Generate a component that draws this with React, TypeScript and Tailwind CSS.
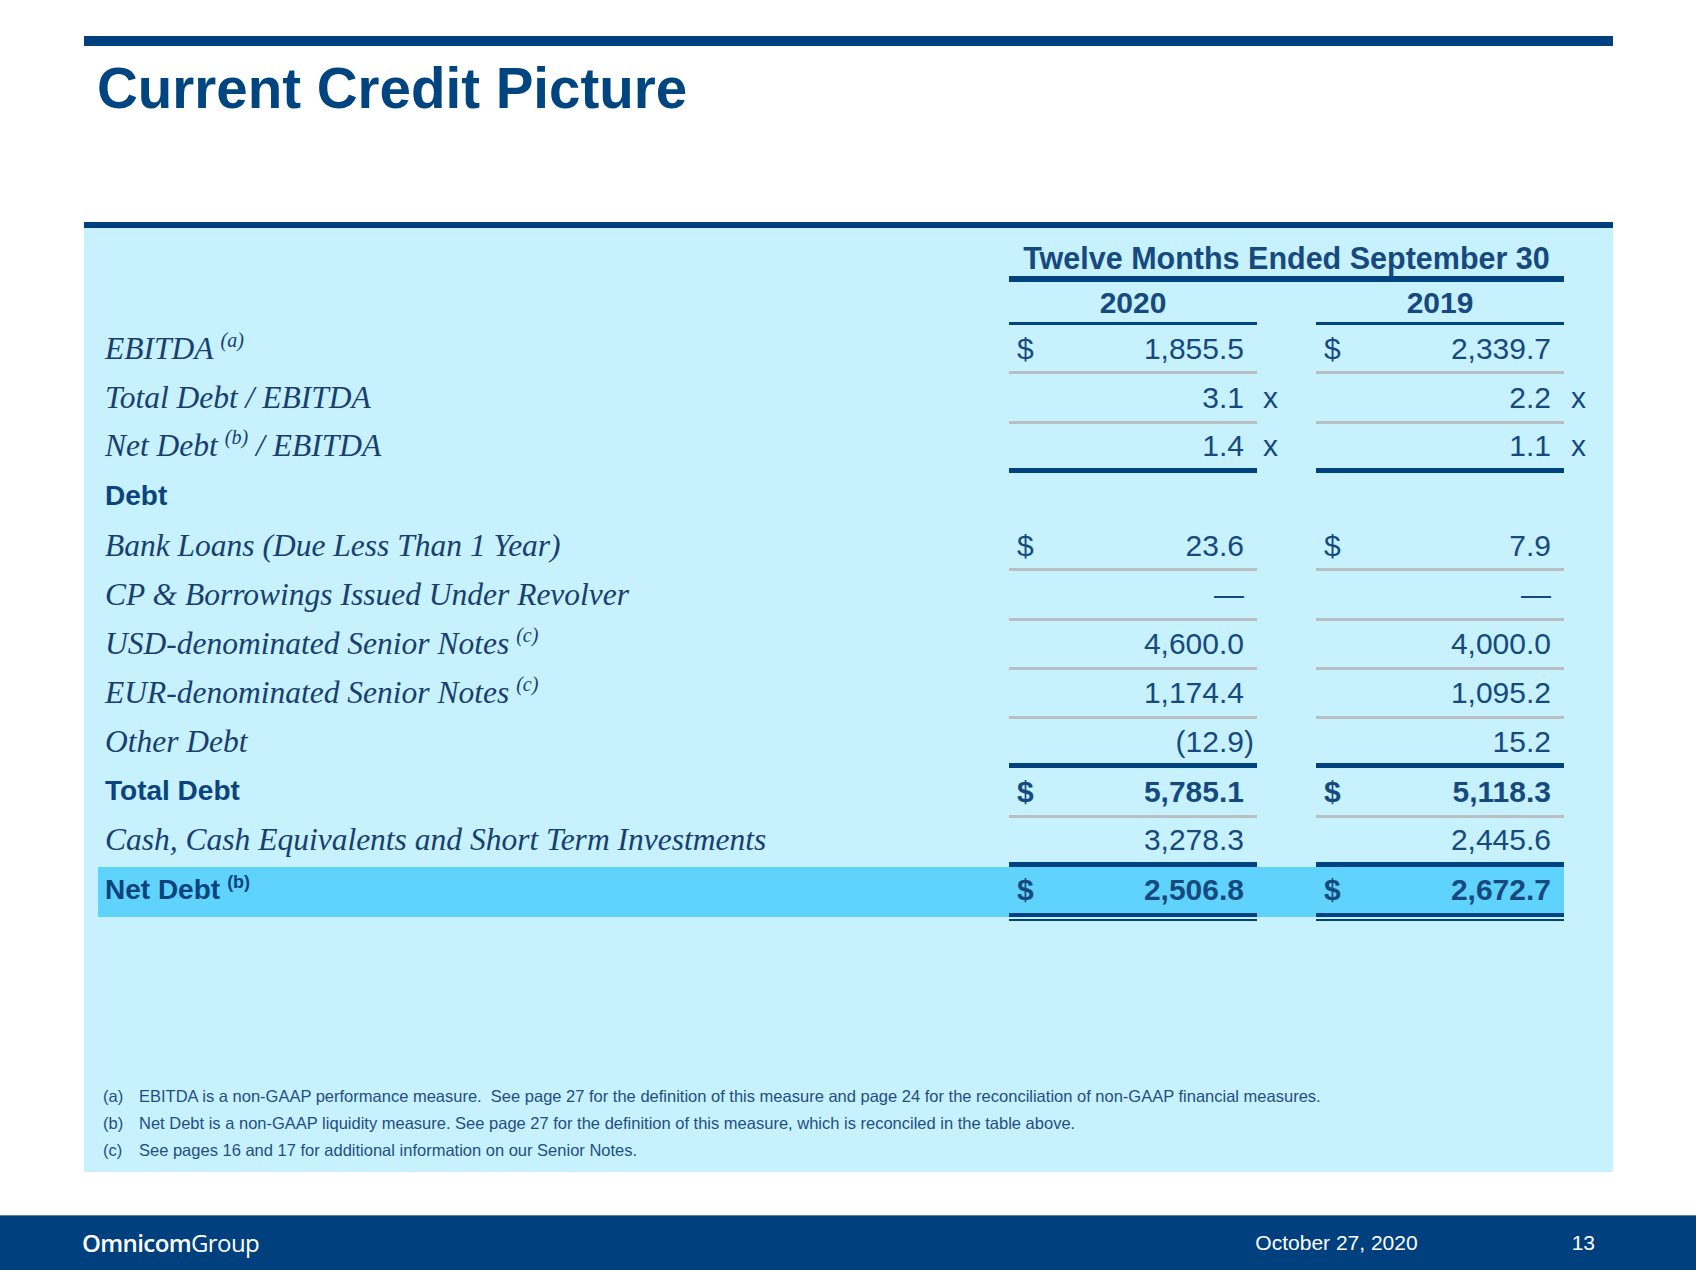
import React from 'react';

type Line = 'gray' | 'dark' | 'none';

type RowData = {
  label: React.ReactNode;
  bold?: boolean;
  a?: string;
  b?: string;
  dollar?: boolean;
  times?: boolean;
  line: Line;
};

const NAVY = 'text-[#164a7e]';

const Sup = ({ children, sans }: { children: React.ReactNode; sans?: boolean }) => (
  <span
    className={
      sans
        ? 'relative top-[-11px] ml-[7px] text-[18px] font-bold'
        : "relative top-[-12px] ml-[7px] text-[20px] font-['Liberation_Serif',serif] italic"
    }
  >
    {children}
  </span>
);

const Value = ({ v }: { v?: string }) => {
  if (!v) return <span />;
  if (v.endsWith(')')) {
    return (
      <span>
        {v.slice(0, -1)}
        <span className="mr-[-10px]">)</span>
      </span>
    );
  }
  return <span>{v}</span>;
};

const rows: RowData[] = [
  { label: <>EBITDA<Sup>(a)</Sup></>, a: '1,855.5', b: '2,339.7', dollar: true, line: 'gray' },
  { label: 'Total Debt / EBITDA', a: '3.1', b: '2.2', times: true, line: 'gray' },
  { label: <>Net Debt<Sup>(b)</Sup>{' / EBITDA'}</>, a: '1.4', b: '1.1', times: true, line: 'dark' },
  { label: 'Debt', bold: true, line: 'none' },
  { label: 'Bank Loans (Due Less Than 1 Year)', a: '23.6', b: '7.9', dollar: true, line: 'gray' },
  { label: 'CP & Borrowings Issued Under Revolver', a: '—', b: '—', line: 'gray' },
  { label: <>USD-denominated Senior Notes<Sup>(c)</Sup></>, a: '4,600.0', b: '4,000.0', line: 'gray' },
  { label: <>EUR-denominated Senior Notes<Sup>(c)</Sup></>, a: '1,174.4', b: '1,095.2', line: 'gray' },
  { label: 'Other Debt', a: '(12.9)', b: '15.2', line: 'dark' },
  { label: 'Total Debt', bold: true, a: '5,785.1', b: '5,118.3', dollar: true, line: 'gray' },
  { label: 'Cash, Cash Equivalents and Short Term Investments', a: '3,278.3', b: '2,445.6', line: 'dark' },
];

const borderFor = (line: Line) => {
  if (line === 'gray') return 'border-b-[3px] border-[#b8bec4]';
  if (line === 'dark') return 'border-b-[5px] border-[#00437e]';
  return 'border-b-[3px] border-transparent';
};

const padFor = (line: Line) => {
  if (line === 'dark') return 'border-b-[5px] border-transparent';
  return 'border-b-[3px] border-transparent';
};

const DataRow = ({ row }: { row: RowData }) => {
  const labelCls = row.bold
    ? 'text-[28px] font-bold text-[#0b437d]'
    : "text-[31.5px] italic font-['Liberation_Serif',serif] text-[#17406f]";
  const valueCls = row.bold ? 'font-bold' : '';
  return (
    <div className="flex h-[49.25px]">
      <div className={`w-[911px] pl-[7px] flex items-center whitespace-pre ${padFor(row.line)} ${labelCls}`}>
        <span>{row.label}</span>
      </div>
      <div className={`w-[248px] pl-[8px] pr-[13px] flex items-center justify-between text-[30px] ${NAVY} ${valueCls} ${borderFor(row.line)}`}>
        <span>{row.dollar ? '$' : ''}</span>
        <Value v={row.a} />
      </div>
      <div className={`w-[59px] pl-[6px] flex items-center text-[30px] ${NAVY} ${padFor(row.line)}`}>
        {row.times ? 'x' : ''}
      </div>
      <div className={`w-[248px] pl-[8px] pr-[13px] flex items-center justify-between text-[30px] ${NAVY} ${valueCls} ${borderFor(row.line)}`}>
        <span>{row.dollar ? '$' : ''}</span>
        <Value v={row.b} />
      </div>
      <div className={`w-[49px] pl-[7px] flex items-center text-[30px] ${NAVY} ${padFor(row.line)}`}>
        {row.times ? 'x' : ''}
      </div>
    </div>
  );
};

const NetDebtCell = ({ v }: { v: string }) => (
  <div className="w-[248px] flex flex-col">
    <div className={`h-[46.25px] bg-[#5fd3fc] pl-[8px] pr-[13px] flex items-center justify-between text-[30px] font-bold ${NAVY}`}>
      <span>$</span>
      <span>{v}</span>
    </div>
    <div className="h-[4px] bg-[#00437e]" />
    <div className="h-[2px]" />
    <div className="h-[2px] bg-[#00437e]" />
  </div>
);

const footnotes = [
  ['(a)', 'EBITDA is a non-GAAP performance measure.\u00a0 See page 27 for the definition of this measure and page 24 for the reconciliation of non-GAAP financial measures.'],
  ['(b)', 'Net Debt is a non-GAAP liquidity measure. See page 27 for the definition of this measure, which is reconciled in the table above.'],
  ['(c)', 'See pages 16 and 17 for additional information on our Senior Notes.'],
];

export default function App() {
  return (
    <div className="w-[1696px] h-[1270px] bg-white flex flex-col font-['Liberation_Sans',Arial,sans-serif]">
      <div className="pl-[84px] pr-[83px] pt-[36px]">
        <div className="h-[10px] bg-[#00407e]" />
        <h1 className="mt-[14px] pl-[13px] text-[56.5px] leading-[57px] font-bold text-[#00457f]">
          Current Credit Picture
        </h1>
        <div className="mt-[105px] h-[6px] bg-[#00407e]" />

        <div className="h-[944px] bg-[#c6f1fd] pl-[14px] flex flex-col">
          {/* column headers */}
          <div className="flex">
            <div className="w-[911px]" />
            <div className={`w-[555px] h-[54px] border-b-[6px] border-[#00437e] flex items-end justify-center pb-[3px] text-[30.5px] leading-[30px] font-bold ${NAVY}`}>
              Twelve Months Ended September 30
            </div>
          </div>
          <div className="flex">
            <div className="w-[911px]" />
            <div className={`w-[248px] h-[43px] border-b-[3px] border-[#00437e] flex items-end justify-center pb-[4px] text-[30px] leading-[30px] font-bold ${NAVY}`}>
              2020
            </div>
            <div className="w-[59px]" />
            <div className={`w-[248px] h-[43px] border-b-[3px] border-[#00437e] flex items-end justify-center pb-[4px] text-[30px] leading-[30px] font-bold ${NAVY}`}>
              2019
            </div>
          </div>

          {rows.map((row, i) => (
            <DataRow key={i} row={row} />
          ))}

          {/* net debt highlight row */}
          <div className="flex h-[54.25px] items-start">
            <div className="w-[911px] h-[50.25px] bg-[#5fd3fc] pl-[7px] pb-[4px] flex items-center text-[28px] font-bold text-[#0b437d]">
              <span>Net Debt<Sup sans>(b)</Sup></span>
            </div>
            <NetDebtCell v="2,506.8" />
            <div className="w-[59px] h-[50.25px] bg-[#5fd3fc]" />
            <NetDebtCell v="2,672.7" />
          </div>

          <div className="mt-auto pb-[8px] pl-[5px] text-[16.5px] leading-[27px] text-[#1f4f80]">
            {footnotes.map(([k, t]) => (
              <div key={k} className="flex whitespace-nowrap">
                <span className="w-[36px]">{k}</span>
                <span>{t}</span>
              </div>
            ))}
          </div>
        </div>
      </div>

      <footer className="mt-auto h-[55px] bg-[#00407e] border-t border-[#5a7ea8] flex items-center text-white">
        <div className="pl-[82px] font-['Open_Sans',sans-serif] text-[24px] leading-none tracking-[-0.6px]">
          <span className="font-semibold">Omnicom</span>
          <span className="font-normal">Group</span>
        </div>
        <span className="ml-auto text-[21px]">October 27, 2020</span>
        <span className="ml-[154px] mr-[101px] text-[21px]">13</span>
      </footer>
    </div>
  );
}
